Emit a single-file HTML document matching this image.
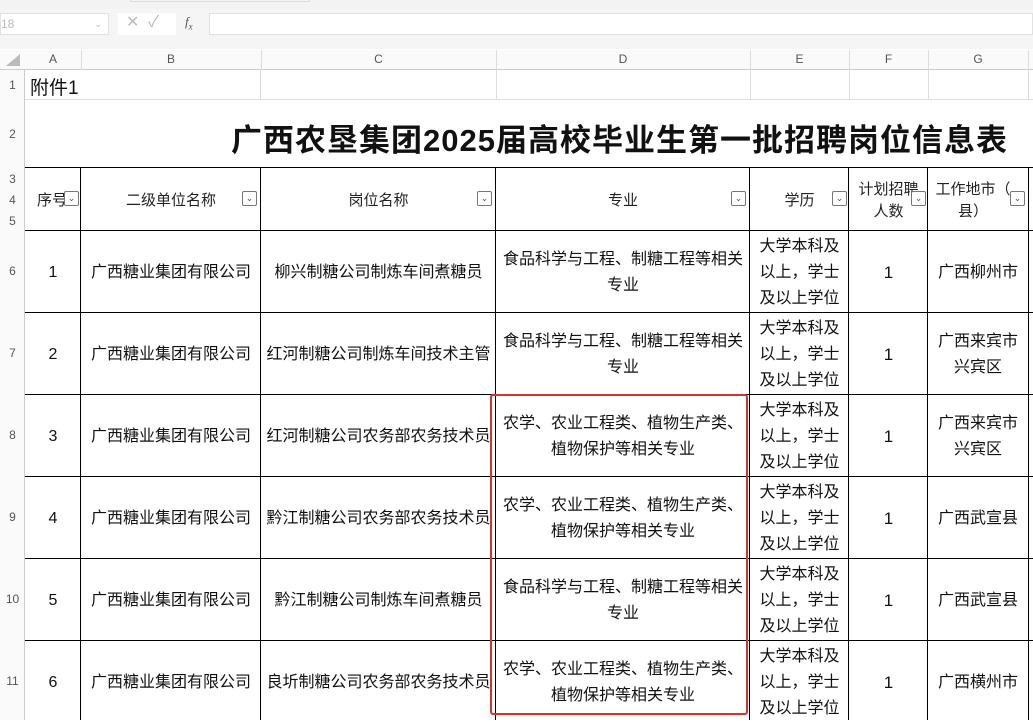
<!DOCTYPE html>
<html><head><meta charset="utf-8"><style>
*{margin:0;padding:0;box-sizing:border-box}
body{width:1033px;height:720px;overflow:hidden;background:#fff;position:relative;font-family:"Liberation Sans","Noto Sans CJK SC",sans-serif;color:#111}
.a{position:absolute}
.c{position:absolute;display:flex;align-items:center;justify-content:center;text-align:center;font-size:16px;line-height:26px;white-space:nowrap;padding-top:3px}
.h{position:absolute;color:#555;font-size:12px;text-align:center;top:52px}
.rn{position:absolute;left:0;width:25px;text-align:center;color:#555;font-size:12px}
.vl{position:absolute;width:1px;background:#000}
.hl{position:absolute;height:1px;background:#000;left:25px;width:1008px}
.dd{position:absolute;width:15px;height:15px;border:1px solid #777;border-radius:2px;background:#fff;font-size:9px;color:#555;text-align:center;line-height:12px}
</style></head><body>
<div class="a" style="left:0;top:0;width:1033px;height:9px;background:#f3f3f3"></div>
<div class="a" style="left:130px;top:0;width:180px;height:2px;border:1px solid #ddd;border-top:none"></div>
<div class="a" style="left:0;top:9px;width:1033px;height:40px;background:#f5f5f5"></div>
<div class="a" style="left:0;top:13px;width:109px;height:22px;background:#fff;border:1px solid #e2e2e2;color:#bbb;font-size:12px;line-height:20px">18<span style="position:absolute;right:6px;font-size:9px">⌄</span></div>
<div class="a" style="left:118px;top:13px;width:58px;height:22px;background:#fff;color:#bbb;font-size:16px;line-height:20px;padding-left:8px">✕&nbsp;&nbsp;✓</div>
<div class="a" style="left:185px;top:14px;color:#555;font-size:13px;font-style:italic;font-family:'Liberation Serif',serif">f<sub style="font-size:9px">x</sub></div>
<div class="a" style="left:209px;top:13px;width:824px;height:22px;background:#fff;border:1px solid #e2e2e2"></div>
<div class="a" style="left:0;top:50px;width:1033px;height:20px;background:#fafafa;border-bottom:1px solid #ccc"></div>
<div class="a" style="left:0;top:70px;width:25px;height:650px;background:#fafafa;border-right:1px solid #ccc"></div>
<div class="a" style="left:6px;top:54px;width:0;height:0;border-left:14px solid transparent;border-bottom:12px solid #bbb"></div>
<div class="h" style="left:25px;width:56px">A</div><div class="h" style="left:81px;width:180px">B</div><div class="h" style="left:261px;width:235px">C</div><div class="h" style="left:496px;width:254px">D</div><div class="h" style="left:750px;width:99px">E</div><div class="h" style="left:849px;width:79px">F</div><div class="h" style="left:928px;width:100px">G</div>
<div class="a" style="left:81px;top:50px;width:1px;height:20px;background:#ddd"></div><div class="a" style="left:261px;top:50px;width:1px;height:20px;background:#ddd"></div><div class="a" style="left:496px;top:50px;width:1px;height:20px;background:#ddd"></div><div class="a" style="left:750px;top:50px;width:1px;height:20px;background:#ddd"></div><div class="a" style="left:849px;top:50px;width:1px;height:20px;background:#ddd"></div><div class="a" style="left:928px;top:50px;width:1px;height:20px;background:#ddd"></div><div class="a" style="left:1028px;top:50px;width:1px;height:20px;background:#ddd"></div>
<div class="rn" style="top:78px">1</div><div class="rn" style="top:127px">2</div><div class="rn" style="top:172px">3</div><div class="rn" style="top:193px">4</div><div class="rn" style="top:214px">5</div><div class="rn" style="top:264px">6</div><div class="rn" style="top:346px">7</div><div class="rn" style="top:428px">8</div><div class="rn" style="top:510px">9</div><div class="rn" style="top:592px">10</div><div class="rn" style="top:674px">11</div>
<div class="a" style="left:25px;top:99px;width:1008px;height:1px;background:#ddd"></div>
<div class="a" style="left:260px;top:70px;width:1px;height:30px;background:#ddd"></div><div class="a" style="left:496px;top:70px;width:1px;height:30px;background:#ddd"></div><div class="a" style="left:750px;top:70px;width:1px;height:30px;background:#ddd"></div><div class="a" style="left:849px;top:70px;width:1px;height:30px;background:#ddd"></div><div class="a" style="left:928px;top:70px;width:1px;height:30px;background:#ddd"></div><div class="a" style="left:1028px;top:70px;width:1px;height:30px;background:#ddd"></div>
<div class="a" style="left:30px;top:73px;font-size:19px">附件1</div>
<div class="a" style="left:231px;top:115px;font-size:31px;font-weight:bold;letter-spacing:1px;white-space:nowrap">广西农垦集团2025届高校毕业生第一批招聘岗位信息表</div>
<div class="hl" style="top:167px"></div><div class="hl" style="top:230px"></div><div class="hl" style="top:312px"></div><div class="hl" style="top:394px"></div><div class="hl" style="top:476px"></div><div class="hl" style="top:558px"></div><div class="hl" style="top:640px"></div>
<div class="vl" style="left:80px;top:167px;height:553px"></div><div class="vl" style="left:260px;top:167px;height:553px"></div><div class="vl" style="left:495px;top:167px;height:553px"></div><div class="vl" style="left:749px;top:167px;height:553px"></div><div class="vl" style="left:848px;top:167px;height:553px"></div><div class="vl" style="left:927px;top:167px;height:553px"></div><div class="vl" style="left:1028px;top:167px;height:553px"></div>
<div class="c" style="left:25px;top:168px;width:42px;height:62px;justify-content:flex-end;font-size:15px;color:#222;overflow:hidden">序号</div>
<div class="c" style="left:81px;top:168px;width:180px;height:62px;font-size:15px;color:#222">二级单位名称</div>
<div class="c" style="left:261px;top:168px;width:235px;height:62px;font-size:15px;color:#222">岗位名称</div>
<div class="c" style="left:496px;top:168px;width:254px;height:62px;font-size:15px;color:#222">专业</div>
<div class="c" style="left:750px;top:168px;width:99px;height:62px;font-size:15px;color:#222">学历</div>
<div class="c" style="left:849px;top:168px;width:79px;height:62px;font-size:15px;color:#222;line-height:22px">计划招聘<br>人数</div>
<div class="c" style="left:933px;top:168px;width:80px;height:62px;font-size:15px;color:#222;line-height:22px">工作地市（<br>县）</div>
<div class="dd" style="left:64px;top:191px">⌄</div><div class="dd" style="left:242px;top:191px">⌄</div><div class="dd" style="left:477px;top:191px">⌄</div><div class="dd" style="left:731px;top:191px">⌄</div><div class="dd" style="left:832px;top:191px">⌄</div><div class="dd" style="left:911px;top:191px">⌄</div><div class="dd" style="left:1010px;top:191px">⌄</div>

<div class="c" style="left:25px;top:231px;width:56px;height:81px">1</div><div class="c" style="left:81px;top:231px;width:180px;height:81px">广西糖业集团有限公司</div><div class="c" style="left:261px;top:231px;width:235px;height:81px">柳兴制糖公司制炼车间煮糖员</div><div class="c" style="left:496px;top:231px;width:254px;height:81px">食品科学与工程、制糖工程等相关<br>专业</div><div class="c" style="left:750px;top:231px;width:99px;height:81px">大学本科及<br>以上，学士<br>及以上学位</div><div class="c" style="left:849px;top:231px;width:79px;height:81px;font-size:17px">1</div><div class="c" style="left:928px;top:231px;width:100px;height:81px">广西柳州市</div>
<div class="c" style="left:25px;top:313px;width:56px;height:81px">2</div><div class="c" style="left:81px;top:313px;width:180px;height:81px">广西糖业集团有限公司</div><div class="c" style="left:261px;top:313px;width:235px;height:81px">红河制糖公司制炼车间技术主管</div><div class="c" style="left:496px;top:313px;width:254px;height:81px">食品科学与工程、制糖工程等相关<br>专业</div><div class="c" style="left:750px;top:313px;width:99px;height:81px">大学本科及<br>以上，学士<br>及以上学位</div><div class="c" style="left:849px;top:313px;width:79px;height:81px;font-size:17px">1</div><div class="c" style="left:928px;top:313px;width:100px;height:81px">广西来宾市<br>兴宾区</div>
<div class="c" style="left:25px;top:395px;width:56px;height:81px">3</div><div class="c" style="left:81px;top:395px;width:180px;height:81px">广西糖业集团有限公司</div><div class="c" style="left:261px;top:395px;width:235px;height:81px">红河制糖公司农务部农务技术员</div><div class="c" style="left:496px;top:395px;width:254px;height:81px">农学、农业工程类、植物生产类、<br>植物保护等相关专业</div><div class="c" style="left:750px;top:395px;width:99px;height:81px">大学本科及<br>以上，学士<br>及以上学位</div><div class="c" style="left:849px;top:395px;width:79px;height:81px;font-size:17px">1</div><div class="c" style="left:928px;top:395px;width:100px;height:81px">广西来宾市<br>兴宾区</div>
<div class="c" style="left:25px;top:477px;width:56px;height:81px">4</div><div class="c" style="left:81px;top:477px;width:180px;height:81px">广西糖业集团有限公司</div><div class="c" style="left:261px;top:477px;width:235px;height:81px">黔江制糖公司农务部农务技术员</div><div class="c" style="left:496px;top:477px;width:254px;height:81px">农学、农业工程类、植物生产类、<br>植物保护等相关专业</div><div class="c" style="left:750px;top:477px;width:99px;height:81px">大学本科及<br>以上，学士<br>及以上学位</div><div class="c" style="left:849px;top:477px;width:79px;height:81px;font-size:17px">1</div><div class="c" style="left:928px;top:477px;width:100px;height:81px">广西武宣县</div>
<div class="c" style="left:25px;top:559px;width:56px;height:81px">5</div><div class="c" style="left:81px;top:559px;width:180px;height:81px">广西糖业集团有限公司</div><div class="c" style="left:261px;top:559px;width:235px;height:81px">黔江制糖公司制炼车间煮糖员</div><div class="c" style="left:496px;top:559px;width:254px;height:81px">食品科学与工程、制糖工程等相关<br>专业</div><div class="c" style="left:750px;top:559px;width:99px;height:81px">大学本科及<br>以上，学士<br>及以上学位</div><div class="c" style="left:849px;top:559px;width:79px;height:81px;font-size:17px">1</div><div class="c" style="left:928px;top:559px;width:100px;height:81px">广西武宣县</div>
<div class="c" style="left:25px;top:641px;width:56px;height:81px">6</div><div class="c" style="left:81px;top:641px;width:180px;height:81px">广西糖业集团有限公司</div><div class="c" style="left:261px;top:641px;width:235px;height:81px">良圻制糖公司农务部农务技术员</div><div class="c" style="left:496px;top:641px;width:254px;height:81px">农学、农业工程类、植物生产类、<br>植物保护等相关专业</div><div class="c" style="left:750px;top:641px;width:99px;height:81px">大学本科及<br>以上，学士<br>及以上学位</div><div class="c" style="left:849px;top:641px;width:79px;height:81px;font-size:17px">1</div><div class="c" style="left:928px;top:641px;width:100px;height:81px">广西横州市</div>
<div class="a" style="left:490px;top:394px;width:258px;height:321px;border:2px solid #d8322c;border-radius:3px"></div>
</body></html>
